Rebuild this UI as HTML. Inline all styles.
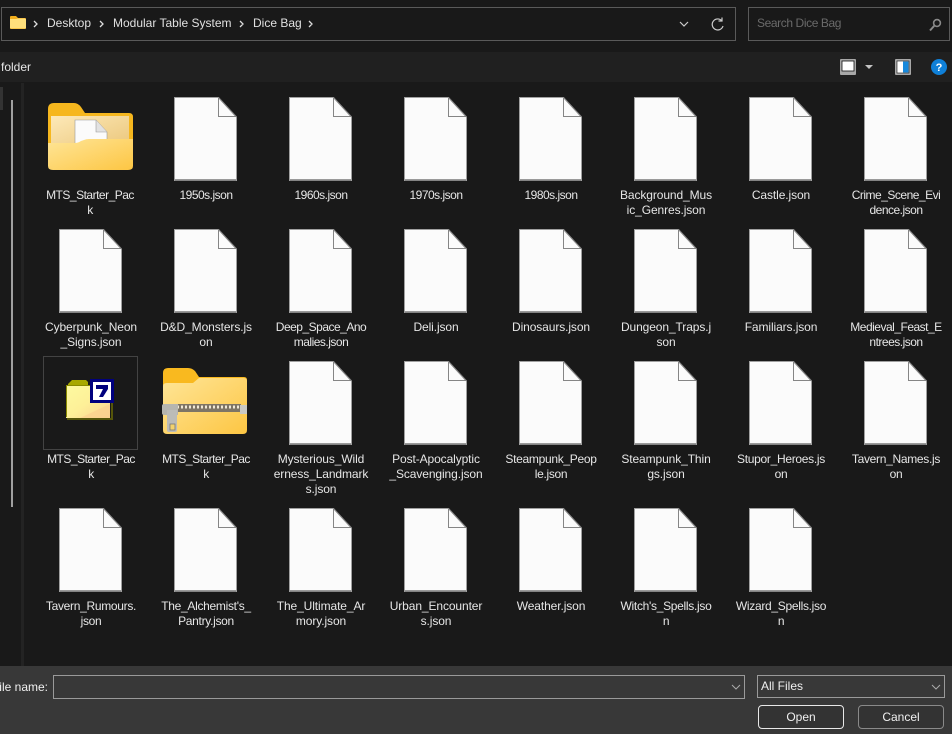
<!DOCTYPE html>
<html><head><meta charset="utf-8">
<style>
html,body{margin:0;padding:0;width:952px;height:734px;overflow:hidden;background:#191919}
body{font-family:"Liberation Sans",sans-serif;font-size:12px;color:#e8e8e8;position:relative}
.a{position:absolute}
.t{position:absolute;width:112px;text-align:center;line-height:15px;font-size:12px;color:#e6e6e6;white-space:nowrap;letter-spacing:-.1px}
.n{letter-spacing:-.5px}
.m{letter-spacing:-.3px}
svg{position:absolute;display:block}
.box{position:absolute;box-sizing:border-box;border:1px solid #5a5a5a}
</style></head><body>
<svg width="0" height="0"><defs>
<g id="f"><path d="M.5.5H44.500L62.500 20V83.500H.5Z" fill="#fbfbfb" stroke="#a0a0a0" stroke-width="1"/><path d="M44.500 1V19.500H62" fill="none" stroke="#858585" stroke-width="1"/><path d="M44.500 .5L62.500 20" fill="none" stroke="#858585" stroke-width="1"/><path d="M1 83H62" stroke="#7a7a7a" stroke-width="1.500"/></g>
<linearGradient id="y1" x1="0" y1="0" x2="1" y2="1"><stop offset="0" stop-color="#fee597"/><stop offset="1" stop-color="#fdc643"/></linearGradient>
<linearGradient id="y2" x1="0" y1="0" x2="1" y2="1"><stop offset="0" stop-color="#fde9b8"/><stop offset="1" stop-color="#ebc77c"/></linearGradient>
<linearGradient id="y3" x1="0" y1="0" x2="1" y2="1"><stop offset="0" stop-color="#fdfaa0"/><stop offset=".5" stop-color="#fdf098"/><stop offset="1" stop-color="#fbcf92"/></linearGradient>
</defs></svg>

<div class="a" style="left:0;top:52px;width:952px;height:30px;background:#202020"></div>
<div class="box" style="left:1px;top:7px;width:735px;height:34px"></div>
<svg style="left:10px;top:16px" width="16" height="13" viewBox="0 0 16 13"><path d="M0 1Q0 0 1 0H6L8 2H15Q16 2 16 3V12Q16 13 15 13H1Q0 13 0 12Z" fill="#f2ae1c"/><path d="M0 3H6L7.500 2.500H15Q16 2.500 16 3.500V12Q16 12.500 15 12.500H1Q0 12.500 0 12Z" fill="#ffe07c"/></svg>
<div class="a" style="left:47px;top:15px;line-height:16px;color:#e0e0e0;white-space:nowrap">Desktop</div>
<div class="a" style="left:113px;top:15px;line-height:16px;color:#e0e0e0;white-space:nowrap">Modular Table System</div>
<div class="a" style="left:253px;top:15px;line-height:16px;color:#e0e0e0;white-space:nowrap">Dice Bag</div>
<svg style="left:0;top:0" width="330" height="40" fill="none" stroke="#ddd" stroke-width="1.300"><path d="M34 21l3 3-3 3M100 21l3 3-3 3M240 21l3 3-3 3M309 21l3 3-3 3"/></svg>
<svg style="left:670px;top:14px" width="56" height="20" fill="none" stroke="#ccc" stroke-width="1.200"><path d="M10 8l4 4 4-4"/><path d="M52 7A5.500 5.500 0 1 0 53 12M52 3.500V7H48.500"/></svg>
<div class="box" style="left:748px;top:7px;width:202px;height:34px"></div>
<div class="a" style="left:757px;top:16px;line-height:15px;color:#6a6a6a;letter-spacing:-.4px">Search Dice Bag</div>
<svg style="left:928px;top:18px" width="14" height="14" fill="none" stroke="#8a8a8a" stroke-width="1.600"><circle cx="9" cy="5" r="3.400"/><path d="M6.500 7.500L2 12.500" stroke-width="2"/></svg>
<div class="a" style="left:1px;top:60px;line-height:15px;color:#e6e6e6">folder</div>
<svg style="left:840px;top:58px" width="112" height="18" viewBox="0 0 112 18"><rect x="0" y="1" width="16" height="16" rx="1" fill="#a8a8a8"/><rect x="2" y="3" width="12" height="10" fill="#fff" stroke="#111" stroke-width=".8"/><path d="M25 7h8l-4 4z" fill="#c4c4c4"/><rect x="55" y="1" width="16" height="16" rx="1" fill="#a8a8a8"/><rect x="57" y="3" width="12" height="12" fill="#fff" stroke="#111" stroke-width=".6"/><rect x="63" y="3.500" width="5.500" height="11" fill="#1688dc"/><circle cx="99" cy="9" r="8" fill="#0f80d8"/><text x="99" y="13" text-anchor="middle" font-family="Liberation Sans" font-weight="700" font-size="11" fill="#fff">?</text></svg>

<div class="a" style="left:0;top:87px;width:3px;height:23px;background:#333"></div>
<div class="a" style="left:11px;top:100px;width:2px;height:407px;background:#a0a0a0"></div>
<div class="a" style="left:21px;top:83px;width:3px;height:583px;background:#232323"></div>
<div class="a" style="left:43px;top:356px;width:95px;height:94px;box-sizing:border-box;border:1px solid #434343"></div>

<svg style="left:48px;top:103px" width="85" height="68" viewBox="0 0 85 68"><path d="M0 6Q0 0 6 0H26Q30 0 33 4L37 10H81Q85 10 85 14V60H0Z" fill="#f6b71e"/><rect x="3" y="13" width="78" height="30" fill="url(#y2)"/><path d="M27 17H48L59 29V44H27Z" fill="#fbfbfb" stroke="#9a9a9a" stroke-width=".6"/><path d="M48 17V29H59" fill="#e2e2e2" stroke="#999" stroke-width=".6"/><path d="M0 40H27Q30 40 33 38L36 37Q38 36 41 36H85V63Q85 67 80 67H5Q0 67 0 63Z" fill="url(#y1)"/></svg>

<svg style="left:66px;top:379px" width="48" height="42" viewBox="0 0 48 42"><path d="M6 1H20L22 3V6H2V5Z" fill="#a8a800"/><path d="M0 6H24V24H44V39H0Z" fill="url(#y3)"/><path d="M0 6H24V7H1V38H0Z" fill="#8a8a00"/><path d="M1 39H47V41H1Z" fill="#55550a"/><path d="M45 24H47V41H45Z" fill="#55550a"/><path d="M14 39L44 25V39Z" fill="#fbd08f" opacity=".75"/><rect x="24" y="0" width="24" height="24" fill="#00007e"/><rect x="27" y="3" width="18" height="18" fill="#fff"/><path d="M30 6H42V10L37 18H33L37 10H30Z" fill="#00007e"/></svg>

<svg style="left:162px;top:367px" width="86" height="68" viewBox="0 0 86 68"><path d="M1 6Q1 1 6 1H26Q30 1 33 4L37 10H82Q85 10 85 13V40H1Z" fill="#f9b91f"/><path d="M1 19Q1 16 5 16H31L37 11H82Q85 11 85 14V63Q85 67 81 67H5Q1 67 1 63Z" fill="url(#y1)"/><rect x="15" y="37" width="64" height="8" fill="#7d7566"/><path d="M15 40H79" stroke="#efe8d6" stroke-width="3" stroke-dasharray="2 2"/><path d="M0 39Q0 37 2 37H16V48H2Q0 48 0 46Z" fill="#b5b5b0"/><rect x="78" y="38" width="7" height="9" fill="#c9c9c4"/><path d="M5 43H15V63Q15 65 13 65H7Q5 65 5 63Z" fill="#bcbcb8"/><rect x="8" y="57" width="5" height="6" fill="#f3d26d" stroke="#777" stroke-width=".8"/></svg>

<!-- row 1 -->
<svg style="left:174px;top:97px" width="63" height="84"><use href="#f"/></svg>
<svg style="left:289px;top:97px" width="63" height="84"><use href="#f"/></svg>
<svg style="left:404px;top:97px" width="63" height="84"><use href="#f"/></svg>
<svg style="left:519px;top:97px" width="63" height="84"><use href="#f"/></svg>
<svg style="left:634px;top:97px" width="63" height="84"><use href="#f"/></svg>
<svg style="left:749px;top:97px" width="63" height="84"><use href="#f"/></svg>
<svg style="left:864px;top:97px" width="63" height="84"><use href="#f"/></svg>
<!-- row 2 -->
<svg style="left:59px;top:229px" width="63" height="84"><use href="#f"/></svg>
<svg style="left:174px;top:229px" width="63" height="84"><use href="#f"/></svg>
<svg style="left:289px;top:229px" width="63" height="84"><use href="#f"/></svg>
<svg style="left:404px;top:229px" width="63" height="84"><use href="#f"/></svg>
<svg style="left:519px;top:229px" width="63" height="84"><use href="#f"/></svg>
<svg style="left:634px;top:229px" width="63" height="84"><use href="#f"/></svg>
<svg style="left:749px;top:229px" width="63" height="84"><use href="#f"/></svg>
<svg style="left:864px;top:229px" width="63" height="84"><use href="#f"/></svg>
<!-- row 3 -->
<svg style="left:289px;top:361px" width="63" height="84"><use href="#f"/></svg>
<svg style="left:404px;top:361px" width="63" height="84"><use href="#f"/></svg>
<svg style="left:519px;top:361px" width="63" height="84"><use href="#f"/></svg>
<svg style="left:634px;top:361px" width="63" height="84"><use href="#f"/></svg>
<svg style="left:749px;top:361px" width="63" height="84"><use href="#f"/></svg>
<svg style="left:864px;top:361px" width="63" height="84"><use href="#f"/></svg>
<!-- row 4 -->
<svg style="left:59px;top:508px" width="63" height="84"><use href="#f"/></svg>
<svg style="left:174px;top:508px" width="63" height="84"><use href="#f"/></svg>
<svg style="left:289px;top:508px" width="63" height="84"><use href="#f"/></svg>
<svg style="left:404px;top:508px" width="63" height="84"><use href="#f"/></svg>
<svg style="left:519px;top:508px" width="63" height="84"><use href="#f"/></svg>
<svg style="left:634px;top:508px" width="63" height="84"><use href="#f"/></svg>
<svg style="left:749px;top:508px" width="63" height="84"><use href="#f"/></svg>

<div class="t n" style="left:34px;top:188px">MTS_Starter_Pac<br>k</div>
<div class="t n" style="left:150px;top:188px">1950s.json</div>
<div class="t n" style="left:265px;top:188px">1960s.json</div>
<div class="t n" style="left:380px;top:188px">1970s.json</div>
<div class="t n" style="left:495px;top:188px">1980s.json</div>
<div class="t" style="left:610px;top:188px">Background_Mus<br>ic_Genres.json</div>
<div class="t" style="left:725px;top:188px">Castle.json</div>
<div class="t n" style="left:840px;top:188px">Crime_Scene_Evi<br>dence.json</div>

<div class="t" style="left:35px;top:320px">Cyberpunk_Neon<br>_Signs.json</div>
<div class="t" style="left:150px;top:320px">D&amp;D_Monsters.js<br>on</div>
<div class="t n" style="left:265px;top:320px">Deep_Space_Ano<br>malies.json</div>
<div class="t" style="left:380px;top:320px">Deli.json</div>
<div class="t" style="left:495px;top:320px">Dinosaurs.json</div>
<div class="t" style="left:610px;top:320px">Dungeon_Traps.j<br>son</div>
<div class="t" style="left:725px;top:320px">Familiars.json</div>
<div class="t n" style="left:840px;top:320px">Medieval_Feast_E<br>ntrees.json</div>

<div class="t n" style="left:35px;top:452px">MTS_Starter_Pac<br>k</div>
<div class="t n" style="left:150px;top:452px">MTS_Starter_Pac<br>k</div>
<div class="t" style="left:265px;top:452px">Mysterious_Wild<br>erness_Landmark<br>s.json</div>
<div class="t" style="left:380px;top:452px">Post-Apocalyptic<br>_Scavenging.json</div>
<div class="t m" style="left:495px;top:452px">Steampunk_Peop<br>le.json</div>
<div class="t" style="left:610px;top:452px">Steampunk_Thin<br>gs.json</div>
<div class="t m" style="left:725px;top:452px">Stupor_Heroes.js<br>on</div>
<div class="t m" style="left:840px;top:452px">Tavern_Names.js<br>on</div>

<div class="t m" style="left:35px;top:599px">Tavern_Rumours.<br>json</div>
<div class="t m" style="left:150px;top:599px">The_Alchemist's_<br>Pantry.json</div>
<div class="t" style="left:265px;top:599px">The_Ultimate_Ar<br>mory.json</div>
<div class="t" style="left:380px;top:599px">Urban_Encounter<br>s.json</div>
<div class="t" style="left:495px;top:599px">Weather.json</div>
<div class="t m" style="left:610px;top:599px">Witch's_Spells.jso<br>n</div>
<div class="t m" style="left:725px;top:599px">Wizard_Spells.jso<br>n</div>

<div class="a" style="left:0;top:666px;width:952px;height:68px;background:#383838"></div>
<div class="a" style="left:-10px;top:680px;width:58px;line-height:15px;text-align:right;color:#f0f0f0;white-space:nowrap">File name:</div>
<div class="a" style="left:53px;top:675px;width:692px;height:24px;box-sizing:border-box;border:1px solid #9a9a9a"></div>
<div class="a" style="left:757px;top:675px;width:188px;height:23px;box-sizing:border-box;border:1px solid #9a9a9a;line-height:21px;padding-left:3px;color:#f0f0f0">All Files</div>
<svg style="left:728px;top:682px" width="220" height="12" fill="none" stroke="#aaa" stroke-width="1"><path d="M4 3l4 4 4-4M204 3l4 4 4-4"/></svg>
<div class="a" style="left:758px;top:705px;width:86px;height:24px;box-sizing:border-box;border:1px solid #e8e8e8;border-radius:4px;background:#333;line-height:22px;text-align:center;color:#f0f0f0">Open</div>
<div class="a" style="left:858px;top:705px;width:86px;height:24px;box-sizing:border-box;border:1px solid #8a8a8a;border-radius:4px;background:#333;line-height:22px;text-align:center;color:#f0f0f0">Cancel</div>
</body></html>
